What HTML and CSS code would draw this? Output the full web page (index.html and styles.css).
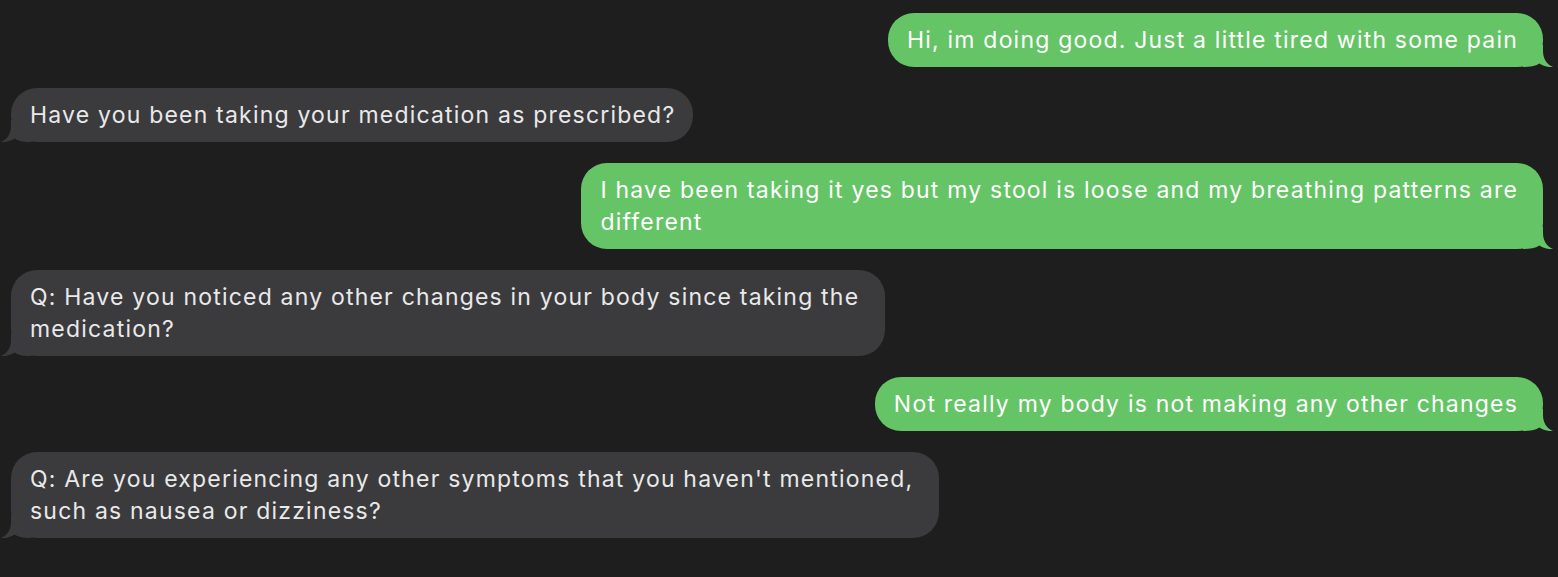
FILE: index.html
```html
<!DOCTYPE html>
<html lang="en">
<head>
<meta charset="utf-8">
<title>Messages</title>
<link rel="stylesheet" href="styles.css">
</head>
<body>
<main class="thread">
  <div class="bubble sent">Hi, im doing good. Just a little tired with some pain<svg class="tail" viewBox="0 0 30 22" width="30" height="22"><path d="M0,0 H20 V6 C20,13 23,19 30,22 C25,22.5 20,21 16.5,18.5 C12,21.5 6,22 0,22 Z"/></svg></div>
  <div class="bubble received">Have you been taking your medication as prescribed?<svg class="tail" viewBox="0 0 30 22" width="30" height="22"><path d="M0,0 H20 V6 C20,13 23,19 30,22 C25,22.5 20,21 16.5,18.5 C12,21.5 6,22 0,22 Z"/></svg></div>
  <div class="bubble sent">I have been taking it yes but my stool is loose and my breathing patterns are<br>different<svg class="tail" viewBox="0 0 30 22" width="30" height="22"><path d="M0,0 H20 V6 C20,13 23,19 30,22 C25,22.5 20,21 16.5,18.5 C12,21.5 6,22 0,22 Z"/></svg></div>
  <div class="bubble received wide">Q: Have you noticed any other changes in your body since taking the<br>medication?<svg class="tail" viewBox="0 0 30 22" width="30" height="22"><path d="M0,0 H20 V6 C20,13 23,19 30,22 C25,22.5 20,21 16.5,18.5 C12,21.5 6,22 0,22 Z"/></svg></div>
  <div class="bubble sent">Not really my body is not making any other changes<svg class="tail" viewBox="0 0 30 22" width="30" height="22"><path d="M0,0 H20 V6 C20,13 23,19 30,22 C25,22.5 20,21 16.5,18.5 C12,21.5 6,22 0,22 Z"/></svg></div>
  <div class="bubble received wide">Q: Are you experiencing any other symptoms that you haven't mentioned,<br>such as nausea or dizziness?<svg class="tail" viewBox="0 0 30 22" width="30" height="22"><path d="M0,0 H20 V6 C20,13 23,19 30,22 C25,22.5 20,21 16.5,18.5 C12,21.5 6,22 0,22 Z"/></svg></div>
</main>
</body>
</html>
```

FILE: styles.css
```css
html, body {
  margin: 0;
  padding: 0;
  background: #1e1e1e;
}

.thread {
  display: flex;
  flex-direction: column;
  gap: 21px;
  padding: 13px 15px 0 11px;
}

.bubble {
  position: relative;
  max-width: 980px;
  padding: 11px 18px 11px 19px;
  border-radius: 26px;
  font-family: Inter, "Noto Sans", sans-serif;
  font-size: 23px;
  line-height: 32px;
  letter-spacing: 1.2px;
}

.sent {
  align-self: flex-end;
  background: #65c466;
  color: #ffffff;
  padding-right: 25px;
}

.received {
  align-self: flex-start;
  background: #3b3b3d;
  color: #e9e9ea;
}

.received.wide {
  padding-right: 26px;
}

.tail {
  position: absolute;
  bottom: 0;
  display: block;
}

.sent .tail {
  right: -10px;
  fill: #65c466;
}

.received .tail {
  left: -10px;
  fill: #3b3b3d;
  transform: scaleX(-1);
}
```
